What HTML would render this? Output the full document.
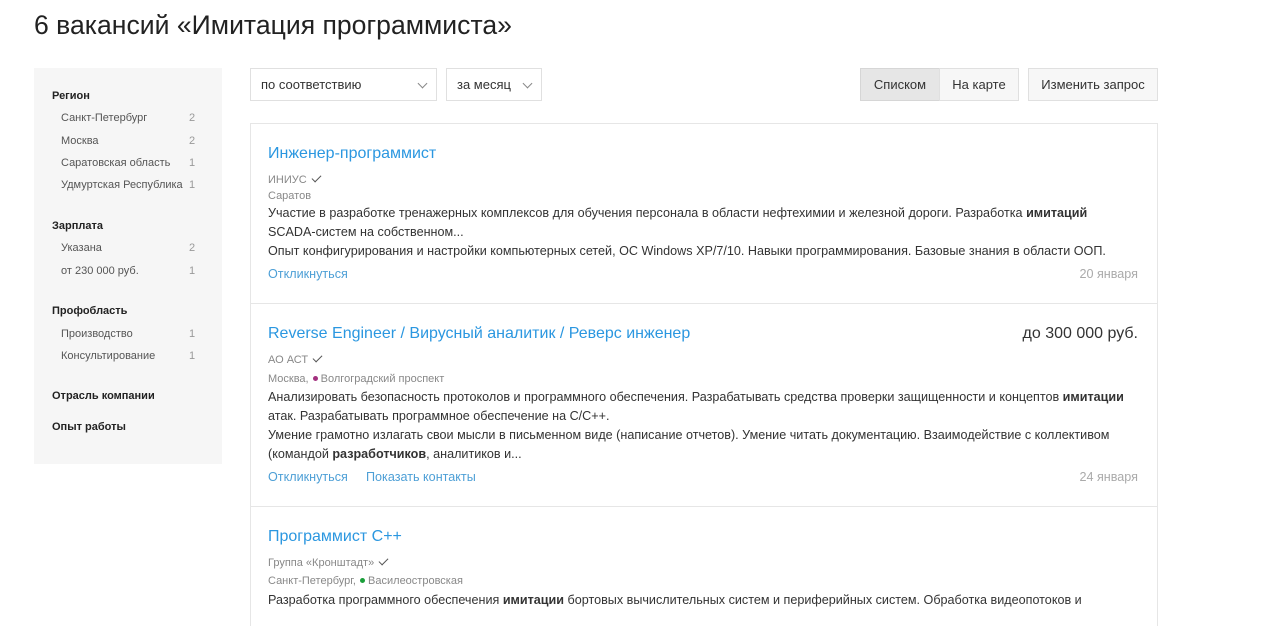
<!DOCTYPE html>
<html><head><meta charset="utf-8"><style>
*{margin:0;padding:0;box-sizing:border-box}
body{width:1280px;height:614px;overflow:hidden;background:#fff;font-family:"Liberation Sans",Arial,sans-serif;color:#333;position:relative}
.a{position:absolute;white-space:nowrap}
h1{position:absolute;left:34px;top:10px;font-size:26.6px;font-weight:normal;color:#222}
.side{position:absolute;left:34px;top:68px;width:188px;height:396px;background:#f6f6f6}
.sh{position:absolute;left:18px;font-size:11px;font-weight:bold;color:#222}
.si{position:absolute;left:27px;font-size:11px;color:#555}
.sn{position:absolute;left:155px;font-size:11px;color:#999}
.box{position:absolute;border:1px solid #e0e0e0;background:#fff;font-size:13px;color:#333;height:33px;line-height:31px}
.chev{position:absolute;top:11px;width:7px;height:7px;border-right:1.3px solid #888;border-bottom:1.3px solid #888;transform:rotate(45deg)}
.card{position:absolute;left:250px;width:908px;border:1px solid #e6e6e6;border-bottom:none}
.t{position:absolute;left:268px;font-size:16px;color:#2b97e0}
.g{position:absolute;left:268px;font-size:11px;color:#888}
.p{position:absolute;left:268px;font-size:12.6px;color:#333;line-height:19px;white-space:nowrap}
.l{position:absolute;font-size:12.6px;color:#4d9fd6}
.d{position:absolute;right:142px;font-size:12.6px;color:#aaa}
.ck{display:inline-block;width:9px;height:5px;border-left:1.6px solid #555;border-bottom:1.6px solid #555;transform:rotate(-45deg);margin-left:5px;position:relative;top:-3px}
.dot{display:inline-block;width:5px;height:5px;border-radius:50%;margin:0 3px 1px 1px}
</style></head><body>
<h1>6 вакансий «Имитация программиста»</h1>
<div class="side">
<div class="sh" style="top:22px">Регион</div>
<div class="si" style="top:44px">Санкт-Петербург</div><div class="sn" style="top:44px">2</div>
<div class="si" style="top:67px">Москва</div><div class="sn" style="top:67px">2</div>
<div class="si" style="top:89px">Саратовская область</div><div class="sn" style="top:89px">1</div>
<div class="si" style="top:111px">Удмуртская Республика</div><div class="sn" style="top:111px">1</div>
<div class="sh" style="top:152px">Зарплата</div>
<div class="si" style="top:174px">Указана</div><div class="sn" style="top:174px">2</div>
<div class="si" style="top:197px">от 230 000 руб.</div><div class="sn" style="top:197px">1</div>
<div class="sh" style="top:237px">Профобласть</div>
<div class="si" style="top:260px">Производство</div><div class="sn" style="top:260px">1</div>
<div class="si" style="top:282px">Консультирование</div><div class="sn" style="top:282px">1</div>
<div class="sh" style="top:322px">Отрасль компании</div>
<div class="sh" style="top:353px">Опыт работы</div>
</div>
<div class="box" style="left:250px;top:68px;width:187px;padding-left:10px">по соответствию<span class="chev" style="left:168px"></span></div>
<div class="box" style="left:446px;top:68px;width:96px;padding-left:10px">за месяц<span class="chev" style="left:77px"></span></div>
<div class="box" style="left:860px;top:68px;width:80px;background:#e6e6e6;text-align:center;border-color:#d6d6d6">Списком</div>
<div class="box" style="left:939px;top:68px;width:80px;background:#f7f7f7;text-align:center">На карте</div>
<div class="box" style="left:1028px;top:68px;width:130px;background:#f7f7f7;text-align:center">Изменить запрос</div>
<div class="card" style="top:123px;height:181px"></div>
<div class="card" style="top:303px;height:204px"></div>
<div class="card" style="top:506px;height:120px"></div>
<div class="t a" style="top:145px">Инженер-программист</div>
<div class="g a" style="top:174px">ИНИУС<span class="ck"></span></div>
<div class="g a" style="top:190px">Саратов</div>
<div class="p" style="top:204px">Участие в разработке тренажерных комплексов для обучения персонала в области нефтехимии и железной дороги. Разработка <b>имитаций</b><br>SCADA-систем на собственном...<br>Опыт конфигурирования и настройки компьютерных сетей, ОС Windows XP/7/10. Навыки программирования. Базовые знания в области ООП.</div>
<div class="l a" style="left:268px;top:267px">Откликнуться</div>
<div class="d a" style="top:267px">20 января</div>
<div class="t a" style="top:325px">Reverse Engineer / Вирусный аналитик / Реверс инженер</div>
<div class="a" style="right:142px;top:325px;font-size:16px;color:#333">до 300 000 руб.</div>
<div class="g a" style="top:354px">АО АСТ<span class="ck"></span></div>
<div class="g a" style="top:373px">Москва, <span class="dot" style="background:#a3307f"></span>Волгоградский проспект</div>
<div class="p" style="top:388px">Анализировать безопасность протоколов и программного обеспечения. Разрабатывать средства проверки защищенности и концептов <b>имитации</b><br>атак. Разрабатывать программное обеспечение на C/C++.<br>Умение грамотно излагать свои мысли в письменном виде (написание отчетов). Умение читать документацию. Взаимодействие с коллективом<br>(командой <b>разработчиков</b>, аналитиков и...</div>
<div class="l a" style="left:268px;top:470px">Откликнуться</div>
<div class="l a" style="left:366px;top:470px">Показать контакты</div>
<div class="d a" style="top:470px">24 января</div>
<div class="t a" style="top:528px">Программист C++</div>
<div class="g a" style="top:557px">Группа «Кронштадт»<span class="ck"></span></div>
<div class="g a" style="top:575px">Санкт-Петербург, <span class="dot" style="background:#1a9f3a"></span>Василеостровская</div>
<div class="p" style="top:591px">Разработка программного обеспечения <b>имитации</b> бортовых вычислительных систем и периферийных систем. Обработка видеопотоков и</div>
</body></html>
